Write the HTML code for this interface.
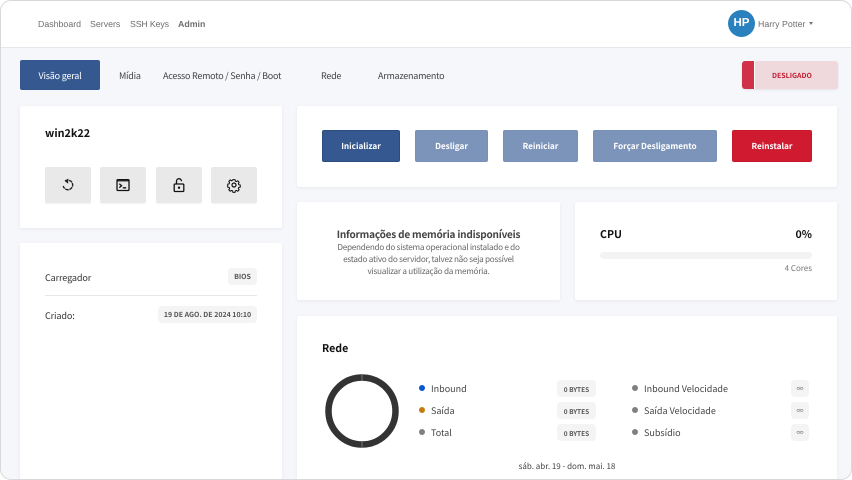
<!DOCTYPE html>
<html>
<head>
<meta charset="utf-8">
<style>
html,body{margin:0;padding:0;width:852px;height:480px;overflow:hidden;background:#fff}
body{font-family:"Noto Sans CJK JP","Liberation Sans",sans-serif;position:relative;text-rendering:geometricPrecision}
#f{position:absolute;left:0;top:0;width:852px;height:480px;overflow:hidden;background:#f6f7fb}
.a{position:absolute;white-space:nowrap}
.card{position:absolute;background:#fff;border-radius:2px;box-shadow:0 1px 3px rgba(30,40,70,.07)}
.t{position:absolute;white-space:nowrap;line-height:14px}
.h{font-family:"Liberation Sans",sans-serif;font-size:8.800px;color:#6f6f6f;top:17px}
.tab{font-size:9px;letter-spacing:-.25px;color:#444;top:69px}
.b{font-size:9.100px;letter-spacing:-.15px;color:#333}
.m{left:297px;width:263px;text-align:center;font-size:8.200px;letter-spacing:-.27px;color:#666}
.btn{position:absolute;top:130px;height:32px;box-sizing:border-box;border-radius:2px;color:#fff;font-size:8.200px;font-weight:700;text-align:center;line-height:30px}
.ib{position:absolute;top:167px;width:46px;height:36px;background:#e9e9e9;border-radius:2px;box-shadow:0 1px 1px rgba(0,0,0,.05)}
.ib svg{position:absolute;left:15px;top:10px}
.pill{position:absolute;background:#f4f4f4;border-radius:4px;font-size:7px;font-weight:700;color:#555;text-align:center;height:17px;line-height:19px;white-space:nowrap}
.by{font-size:6.500px}
.inf{font-size:7px;font-weight:400;color:#666;line-height:18px}
.dot{position:absolute;width:6px;height:6px;border-radius:50%}
.lg{position:absolute;font-size:9px;color:#444;white-space:nowrap;line-height:14px}
#edge{position:absolute;left:0;top:0;width:852px;height:480px;box-sizing:border-box;border:1px solid #d8d8d8;border-radius:11px;box-shadow:0 0 0 8px #fff;pointer-events:none}
</style>
</head>
<body>
<div id="f">
  <div class="a" style="left:0;top:0;width:852px;height:47px;background:#fff;border-bottom:1px solid #e6e8ee"></div>
  <div class="t h" style="left:38px">Dashboard</div>
  <div class="t h" style="left:90px">Servers</div>
  <div class="t h" style="left:130px;letter-spacing:-.15px">SSH Keys</div>
  <div class="t h" style="left:178px;font-weight:700">Admin</div>
  <div class="a" style="left:728px;top:10px;width:27px;height:27px;border-radius:50%;background:#2a81bd;color:#fff;font-family:'Liberation Sans',sans-serif;font-weight:700;font-size:11.500px;text-align:center;line-height:27px">HP</div>
  <div class="t h" style="left:758px">Harry Potter</div>
  <div class="a" style="left:809px;top:22px;width:0;height:0;border-left:2.500px solid transparent;border-right:2.500px solid transparent;border-top:3px solid #777"></div>

  <div class="a" style="left:20px;top:60px;width:80px;height:30px;background:#34588f;border-radius:2px;color:#fff;font-size:9px;letter-spacing:-.2px;text-align:center;line-height:31px">Visão geral</div>
  <div class="t tab" style="left:119px">Mídia</div>
  <div class="t tab" style="left:163px">Acesso Remoto / Senha / Boot</div>
  <div class="t tab" style="left:321px">Rede</div>
  <div class="t tab" style="left:378px">Armazenamento</div>

  <div class="a" style="left:742px;top:61px;width:96px;height:28px;background:#f0d9dc;border-radius:3px;box-shadow:0 1px 2px rgba(0,0,0,.08)"></div>
  <div class="a" style="left:742px;top:61px;width:13px;height:28px;background:#cf3148;border-radius:3px 0 0 3px;border-right:1px solid #fff;box-sizing:border-box"></div>
  <div class="t" style="left:772px;top:68.500px;font-size:7px;font-weight:700;color:#c01c30">DESLIGADO</div>

  <div class="card" style="left:20px;top:106px;width:262px;height:122px"></div>
  <div class="t" style="left:45px;top:126px;font-size:10.800px;font-weight:700;color:#111">win2k22</div>
  <div class="ib" style="left:45px"><svg width="16" height="16" viewBox="0 0 16 16" fill="none" stroke="#222" stroke-width="1.400"><path d="M5 4.100A4.800 4.800 0 1 1 3.200 9" stroke-dasharray="3.600 .7"/><path d="M8.200 1.500 4.800 4.100l3.400 2.600z" fill="#222" stroke="none"/></svg></div>
  <div class="ib" style="left:100px"><svg width="16" height="16" viewBox="0 0 16 16" fill="none" stroke="#111" stroke-width="1.300"><rect x="2" y="2.700" width="12" height="10.800" rx="1"/><path d="M2 3.900h12" stroke-width="1"/><path d="M4.300 6.800 6.600 8.700l-2.300 1.900M7.800 10.800h3.400"/></svg></div>
  <div class="ib" style="left:156px"><svg width="16" height="16" viewBox="0 0 16 16" fill="none" stroke="#111" stroke-width="1.300"><rect x="3.200" y="7" width="9.600" height="7.500" rx="1"/><path d="M5.500 7V4.200a2.500 2.500 0 0 1 5 0"/><circle cx="8" cy="10.700" r="1.200" fill="#111" stroke="none"/></svg></div>
  <div class="ib" style="left:211px"><svg width="16" height="16" viewBox="0 0 16 16" fill="none" stroke="#111" stroke-width="1.200"><path d="M6.800 2h2.400l.4 1.700 1.300.6 1.500-.9 1.600 1.700-.9 1.500.5 1.300 1.700.4v2.400l-1.700.4-.5 1.300.9 1.500-1.600 1.600-1.500-.9-1.300.5-.4 1.700H6.800l-.4-1.700-1.300-.5-1.500.9-1.600-1.600.9-1.500-.5-1.300-1.700-.4V7.300l1.700-.4.5-1.300-.9-1.500 1.600-1.700 1.500.9 1.300-.6z" transform="translate(1.100 .9) scale(.86)"/><circle cx="8" cy="8" r="2"/></svg></div>

  <div class="card" style="left:20px;top:243px;width:262px;height:250px"></div>
  <div class="t b" style="left:45px;top:270px">Carregador</div>
  <div class="pill" style="left:228px;top:268px;width:29px">BIOS</div>
  <div class="a" style="left:45px;top:295px;width:212px;height:1px;background:#e8e8e8"></div>
  <div class="t b" style="left:45px;top:308px">Criado:</div>
  <div class="pill" style="left:158px;top:306px;width:99px">19 DE AGO. DE 2024 10:10</div>

  <div class="card" style="left:297px;top:106px;width:540px;height:81px"></div>
  <div class="btn" style="left:322px;width:78px;background:#34588f;border:1px solid #2c4d80">Inicializar</div>
  <div class="btn" style="left:415px;width:73px;background:#7c93ba;border:1px solid #7690b8">Desligar</div>
  <div class="btn" style="left:503px;width:75px;background:#7c93ba;border:1px solid #7690b8">Reiniciar</div>
  <div class="btn" style="left:593px;width:124px;background:#7c93ba;border:1px solid #7690b8">Forçar Desligamento</div>
  <div class="btn" style="left:732px;width:80px;background:#cf1a2f;border:1px solid #c8182c">Reinstalar</div>

  <div class="card" style="left:297px;top:202px;width:263px;height:98px"></div>
  <div class="t" style="left:297px;width:263px;text-align:center;top:227px;font-size:10px;letter-spacing:-.2px;font-weight:700;color:#444">Informações de memória indisponíveis</div>
  <div class="t m" style="top:239.500px">Dependendo do sistema operacional instalado e do</div>
  <div class="t m" style="top:251.500px">estado ativo do servidor, talvez não seja possível</div>
  <div class="t m" style="top:263.500px">visualizar a utilização da memória.</div>

  <div class="card" style="left:575px;top:202px;width:262px;height:98px"></div>
  <div class="t" style="left:600px;top:227.500px;font-size:10.600px;font-weight:700;color:#111">CPU</div>
  <div class="t" style="left:741px;width:71px;text-align:right;top:227.500px;font-size:10.600px;font-weight:700;color:#111">0%</div>
  <div class="a" style="left:600px;top:252px;width:212px;height:7px;border-radius:4px;background:#f3f3f3"></div>
  <div class="t" style="left:741px;width:71px;text-align:right;top:262px;font-size:8px;color:#777">4 Cores</div>

  <div class="card" style="left:297px;top:316px;width:540px;height:180px"></div>
  <div class="t" style="left:322px;top:341.500px;font-size:10.600px;font-weight:700;color:#111">Rede</div>
  <svg class="a" style="left:325px;top:374px" width="74" height="74" viewBox="0 0 74 74"><circle cx="37" cy="37" r="33.500" fill="none" stroke="#333" stroke-width="6.500"/><path d="M37 0v7M37 67v7" stroke="#777" stroke-width="1"/></svg>

  <div class="dot" style="left:419px;top:385px;background:#0b57d0"></div>
  <div class="lg" style="left:431px;top:381.500px">Inbound</div>
  <div class="pill by" style="left:557px;top:380px;width:39px">0 BYTES</div>
  <div class="dot" style="left:419px;top:407px;background:#c77a12"></div>
  <div class="lg" style="left:431px;top:403.500px">Saída</div>
  <div class="pill by" style="left:557px;top:402px;width:39px">0 BYTES</div>
  <div class="dot" style="left:419px;top:429px;background:#808080"></div>
  <div class="lg" style="left:431px;top:425.500px">Total</div>
  <div class="pill by" style="left:557px;top:424px;width:39px">0 BYTES</div>

  <div class="dot" style="left:632px;top:385px;background:#808080"></div>
  <div class="lg" style="left:644px;top:381.500px">Inbound Velocidade</div>
  <div class="pill inf" style="left:791px;top:380px;width:18px">∞</div>
  <div class="dot" style="left:632px;top:407px;background:#808080"></div>
  <div class="lg" style="left:644px;top:403.500px">Saída Velocidade</div>
  <div class="pill inf" style="left:791px;top:402px;width:18px">∞</div>
  <div class="dot" style="left:632px;top:429px;background:#808080"></div>
  <div class="lg" style="left:644px;top:425.500px">Subsídio</div>
  <div class="pill inf" style="left:791px;top:424px;width:18px">∞</div>

  <div class="t" style="left:297px;width:540px;text-align:center;top:460px;font-size:8px;color:#444">sáb. abr. 19 - dom. mai. 18</div>
</div>
<div id="edge"></div>
</body>
</html>
